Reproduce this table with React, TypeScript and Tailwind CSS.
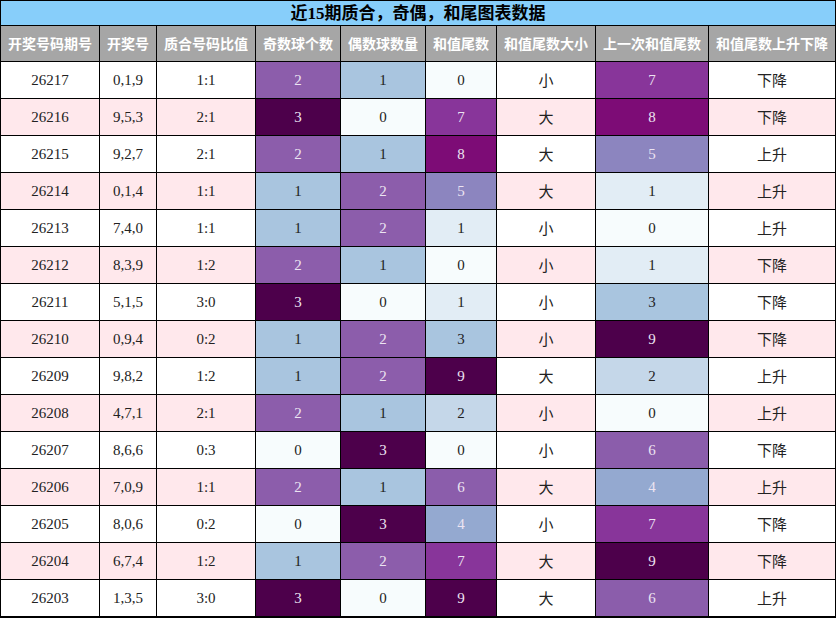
import React from 'react';

type Row = {
  issue: string;
  nums: string;
  ratio: string;
  odd: number;
  even: number;
  tail: number;
  size: string;
  prev: number;
  trend: string;
};

const rows: Row[] = [
  { issue: '26217', nums: '0,1,9', ratio: '1:1', odd: 2, even: 1, tail: 0, size: '小', prev: 7, trend: '下降' },
  { issue: '26216', nums: '9,5,3', ratio: '2:1', odd: 3, even: 0, tail: 7, size: '大', prev: 8, trend: '下降' },
  { issue: '26215', nums: '9,2,7', ratio: '2:1', odd: 2, even: 1, tail: 8, size: '大', prev: 5, trend: '上升' },
  { issue: '26214', nums: '0,1,4', ratio: '1:1', odd: 1, even: 2, tail: 5, size: '大', prev: 1, trend: '上升' },
  { issue: '26213', nums: '7,4,0', ratio: '1:1', odd: 1, even: 2, tail: 1, size: '小', prev: 0, trend: '上升' },
  { issue: '26212', nums: '8,3,9', ratio: '1:2', odd: 2, even: 1, tail: 0, size: '小', prev: 1, trend: '下降' },
  { issue: '26211', nums: '5,1,5', ratio: '3:0', odd: 3, even: 0, tail: 1, size: '小', prev: 3, trend: '下降' },
  { issue: '26210', nums: '0,9,4', ratio: '0:2', odd: 1, even: 2, tail: 3, size: '小', prev: 9, trend: '下降' },
  { issue: '26209', nums: '9,8,2', ratio: '1:2', odd: 1, even: 2, tail: 9, size: '大', prev: 2, trend: '上升' },
  { issue: '26208', nums: '4,7,1', ratio: '2:1', odd: 2, even: 1, tail: 2, size: '小', prev: 0, trend: '上升' },
  { issue: '26207', nums: '8,6,6', ratio: '0:3', odd: 0, even: 3, tail: 0, size: '小', prev: 6, trend: '下降' },
  { issue: '26206', nums: '7,0,9', ratio: '1:1', odd: 2, even: 1, tail: 6, size: '大', prev: 4, trend: '上升' },
  { issue: '26205', nums: '8,0,6', ratio: '0:2', odd: 0, even: 3, tail: 4, size: '小', prev: 7, trend: '下降' },
  { issue: '26204', nums: '6,7,4', ratio: '1:2', odd: 1, even: 2, tail: 7, size: '大', prev: 9, trend: '下降' },
  { issue: '26203', nums: '1,3,5', ratio: '3:0', odd: 3, even: 0, tail: 9, size: '大', prev: 6, trend: '上升' },
];

// BuPu scale, counts 0..3
const countColor: Record<number, string> = {
  0: 'bg-[#f7fcfd] text-[#222]',
  1: 'bg-[#a9c5df] text-[#222]',
  2: 'bg-[#8c5dab] text-[#ece4f2]',
  3: 'bg-[#4d004b] text-[#ece4f2]',
};

// BuPu scale, tails 0..9
const tailColor: Record<number, string> = {
  0: 'bg-[#f7fcfd] text-[#222]',
  1: 'bg-[#e2edf5] text-[#222]',
  2: 'bg-[#c5d7e9] text-[#222]',
  3: 'bg-[#a9c5df] text-[#222]',
  4: 'bg-[#94a9d0] text-[#ece4f2]',
  5: 'bg-[#8c85bf] text-[#ece4f2]',
  6: 'bg-[#8b5dab] text-[#ece4f2]',
  7: 'bg-[#88359a] text-[#ece4f2]',
  8: 'bg-[#7d0c76] text-[#ece4f2]',
  9: 'bg-[#4d004b] text-[#ece4f2]',
};

const headers = ['开奖号码期号', '开奖号', '质合号码比值', '奇数球个数', '偶数球数量', '和值尾数', '和值尾数大小', '上一次和值尾数', '和值尾数上升下降'];

const serif = "font-['Liberation_Serif','Noto_Sans_CJK_SC',serif]";
const cjk = "font-['Noto_Sans_CJK_SC',sans-serif]";

export default function App() {
  return (
    <div className="w-[836px] border border-black bg-white">
      <div className="h-[25px] bg-[#87cefa] border-b border-black flex items-center justify-center text-[17px] font-bold text-black font-['Liberation_Serif','Noto_Sans_CJK_SC',serif] leading-none">
        近15期质合，奇偶，和尾图表数据
      </div>
      <div className="grid grid-cols-[99px_57px_99px_85px_85px_71px_99px_113px_127px]">
        {headers.map((h) => (
          <div
            key={h}
            className={`h-[36px] bg-[#a6a6a6] border-r border-b border-black flex items-center justify-center text-[14px] font-bold text-white whitespace-nowrap ${cjk}`}
          >
            {h}
          </div>
        ))}
        {rows.map((r, i) => {
          const base = i % 2 === 1 ? 'bg-[#ffe8ec] text-[#222]' : 'bg-white text-[#222]';
          const cell = 'h-[37px] border-r border-b border-black flex items-center justify-center text-[15px]';
          return (
            <React.Fragment key={r.issue}>
              <div className={`${cell} ${base} ${serif}`}>{r.issue}</div>
              <div className={`${cell} ${base} ${serif}`}>{r.nums}</div>
              <div className={`${cell} ${base} ${serif}`}>{r.ratio}</div>
              <div className={`${cell} ${countColor[r.odd]} ${serif}`}>{r.odd}</div>
              <div className={`${cell} ${countColor[r.even]} ${serif}`}>{r.even}</div>
              <div className={`${cell} ${tailColor[r.tail]} ${serif}`}>{r.tail}</div>
              <div className={`${cell} ${base} ${cjk}`}>{r.size}</div>
              <div className={`${cell} ${tailColor[r.prev]} ${serif}`}>{r.prev}</div>
              <div className={`${cell} ${base} ${cjk}`}>{r.trend}</div>
            </React.Fragment>
          );
        })}
      </div>
    </div>
  );
}
